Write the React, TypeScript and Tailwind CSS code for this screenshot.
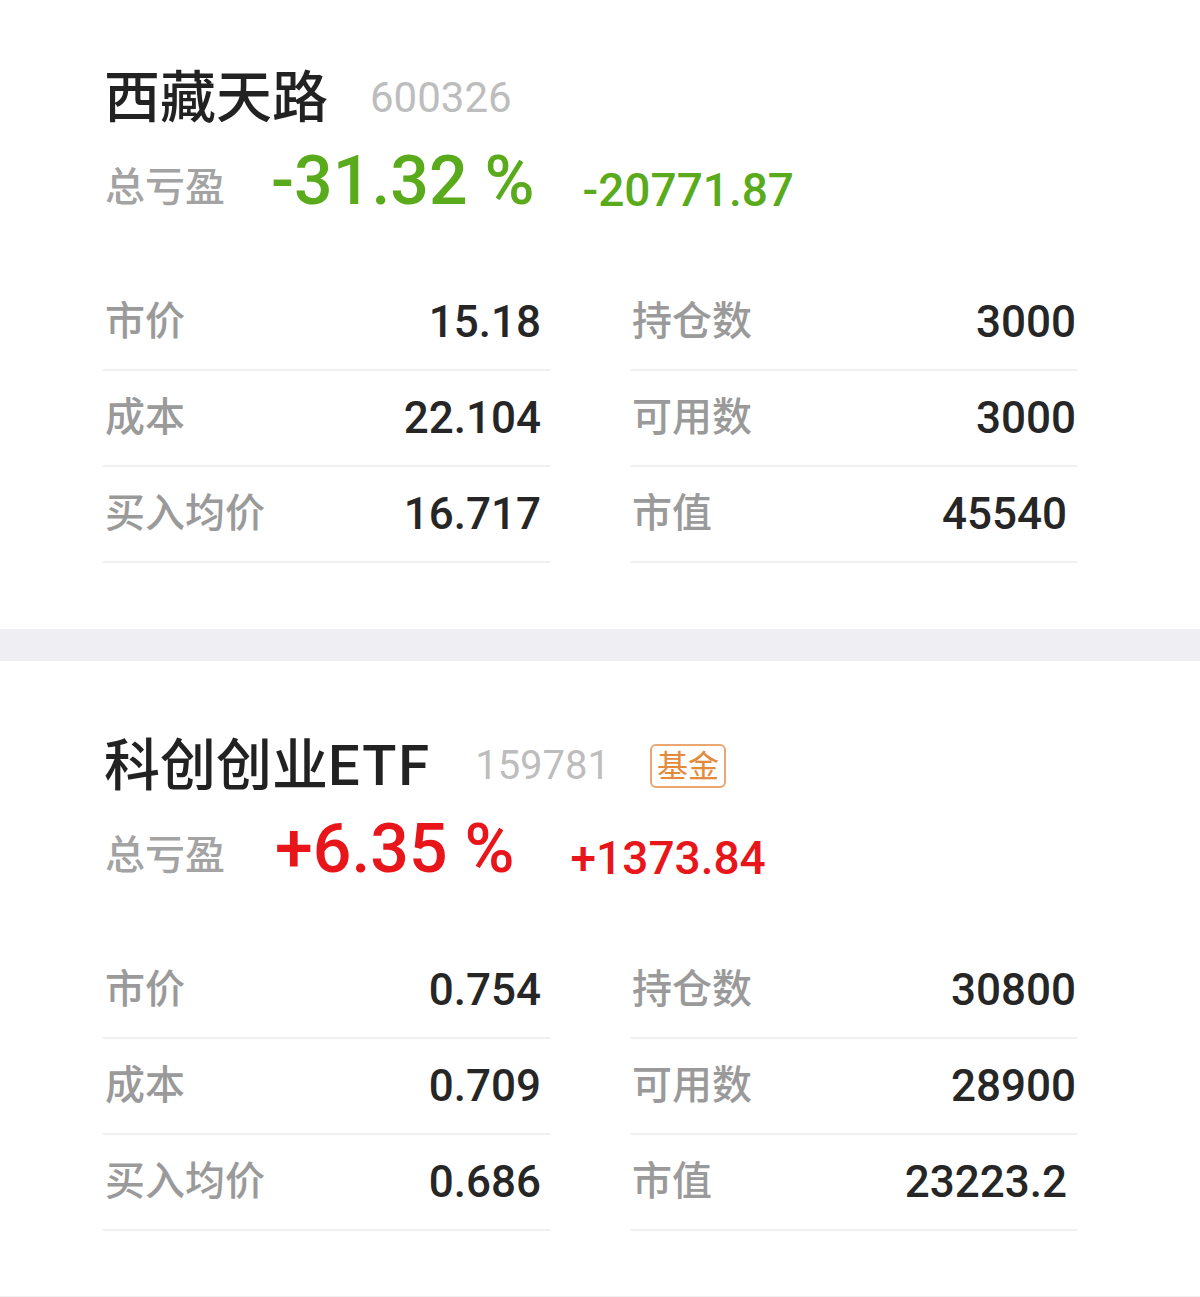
import React from "react";

type Row = { l: string; v: string; pr?: string };

const FONT = { fontFamily: "Roboto, 'Noto Sans CJK SC', sans-serif" };

function Table({ left, right }: { left: Row[]; right: Row[] }) {
  const col = (rows: Row[]) => (
    <div className="w-[447px] flex flex-col">
      {rows.map((r, i) => (
        <div
          key={i}
          className="h-[96px] border-b-2 border-[#f0f0f0] flex items-center justify-between pl-[2px]"
        >
          <span className="text-[40px] leading-none font-medium text-[#9a9a9a]">{r.l}</span>
          <span className={`text-[44px] leading-none font-medium text-[#262626] ${r.pr}`}>{r.v}</span>
        </div>
      ))}
    </div>
  );
  return (
    <div className="flex pl-[103px] gap-[80px]">
      {col(left)}
      {col(right)}
    </div>
  );
}

function Card({
  name,
  code,
  badge,
  pct,
  amt,
  color,
  left,
  right,
  second,
}: {
  name: React.ReactNode;
  code: string;
  badge?: boolean;
  pct: string;
  amt: string;
  color: string;
  left: Row[];
  right: Row[];
  second?: boolean;
}) {
  return (
    <div className={`bg-white ${second ? "pt-[7px] pb-[65px] border-b-2 border-[#f0f0f0]" : "pb-[66px]"}`}>
      <div className="pl-[104px] pt-[63px] h-[133px] flex items-center">
        <span className="text-[56px] leading-none font-medium text-[#222222]">{name}</span>
        <span className={`${second ? "ml-[44px] text-[40px]" : "ml-[42px] text-[42px]"} leading-none text-[#bdbdbd]`}>{code}</span>
        {badge && (
          <span className="ml-[40px] h-[44px] px-[5px] flex items-center border-2 border-[#e9a772] rounded-[6px] text-[31px] leading-none text-[#e38a3c]">
            基金
          </span>
        )}
      </div>
      <div className="pl-[105px] mt-[14px] h-[80px] flex items-baseline">
        <span className="text-[40px] leading-none font-medium text-[#a3a3a3] -translate-y-[3px]">总亏盈</span>
        <span className={`${second ? "ml-[50px]" : "ml-[46px]"} text-[68px] leading-none font-medium ${color}`}>{pct}</span>
        <span className={`${second ? "ml-[56px]" : "ml-[48px]"} text-[46px] leading-none font-medium translate-y-[2px] ${color}`}>{amt}</span>
      </div>
      <div className="mt-[48px]">
        <Table left={left} right={right} />
      </div>
    </div>
  );
}

export default function App() {
  return (
    <div className="w-[1200px] h-[1297px] bg-white overflow-hidden" style={FONT}>
      <Card
        name="西藏天路"
        code="600326"
        pct="-31.32 %"
        amt="-20771.87"
        color="text-[#5aab1c]"
        left={[
          { l: "市价", v: "15.18", pr: "pr-[9px]" },
          { l: "成本", v: "22.104", pr: "pr-[9px]" },
          { l: "买入均价", v: "16.717", pr: "pr-[9px]" },
        ]}
        right={[
          { l: "持仓数", v: "3000", pr: "pr-[1px]" },
          { l: "可用数", v: "3000", pr: "pr-[1px]" },
          { l: "市值", v: "45540", pr: "pr-[10px]" },
        ]}
      />
      <div className="h-[32px] bg-[#efeef3]" />
      <Card
        name={
          <>
            科创创业<span className="tracking-[2px]">ETF</span>
          </>
        }
        code="159781"
        badge
        pct="+6.35 %"
        amt="+1373.84"
        color="text-[#e8161b]"
        left={[
          { l: "市价", v: "0.754", pr: "pr-[9px]" },
          { l: "成本", v: "0.709", pr: "pr-[9px]" },
          { l: "买入均价", v: "0.686", pr: "pr-[9px]" },
        ]}
        right={[
          { l: "持仓数", v: "30800", pr: "pr-[1px]" },
          { l: "可用数", v: "28900", pr: "pr-[1px]" },
          { l: "市值", v: "23223.2", pr: "pr-[10px]" },
        ]}
        second
      />
    </div>
  );
}
